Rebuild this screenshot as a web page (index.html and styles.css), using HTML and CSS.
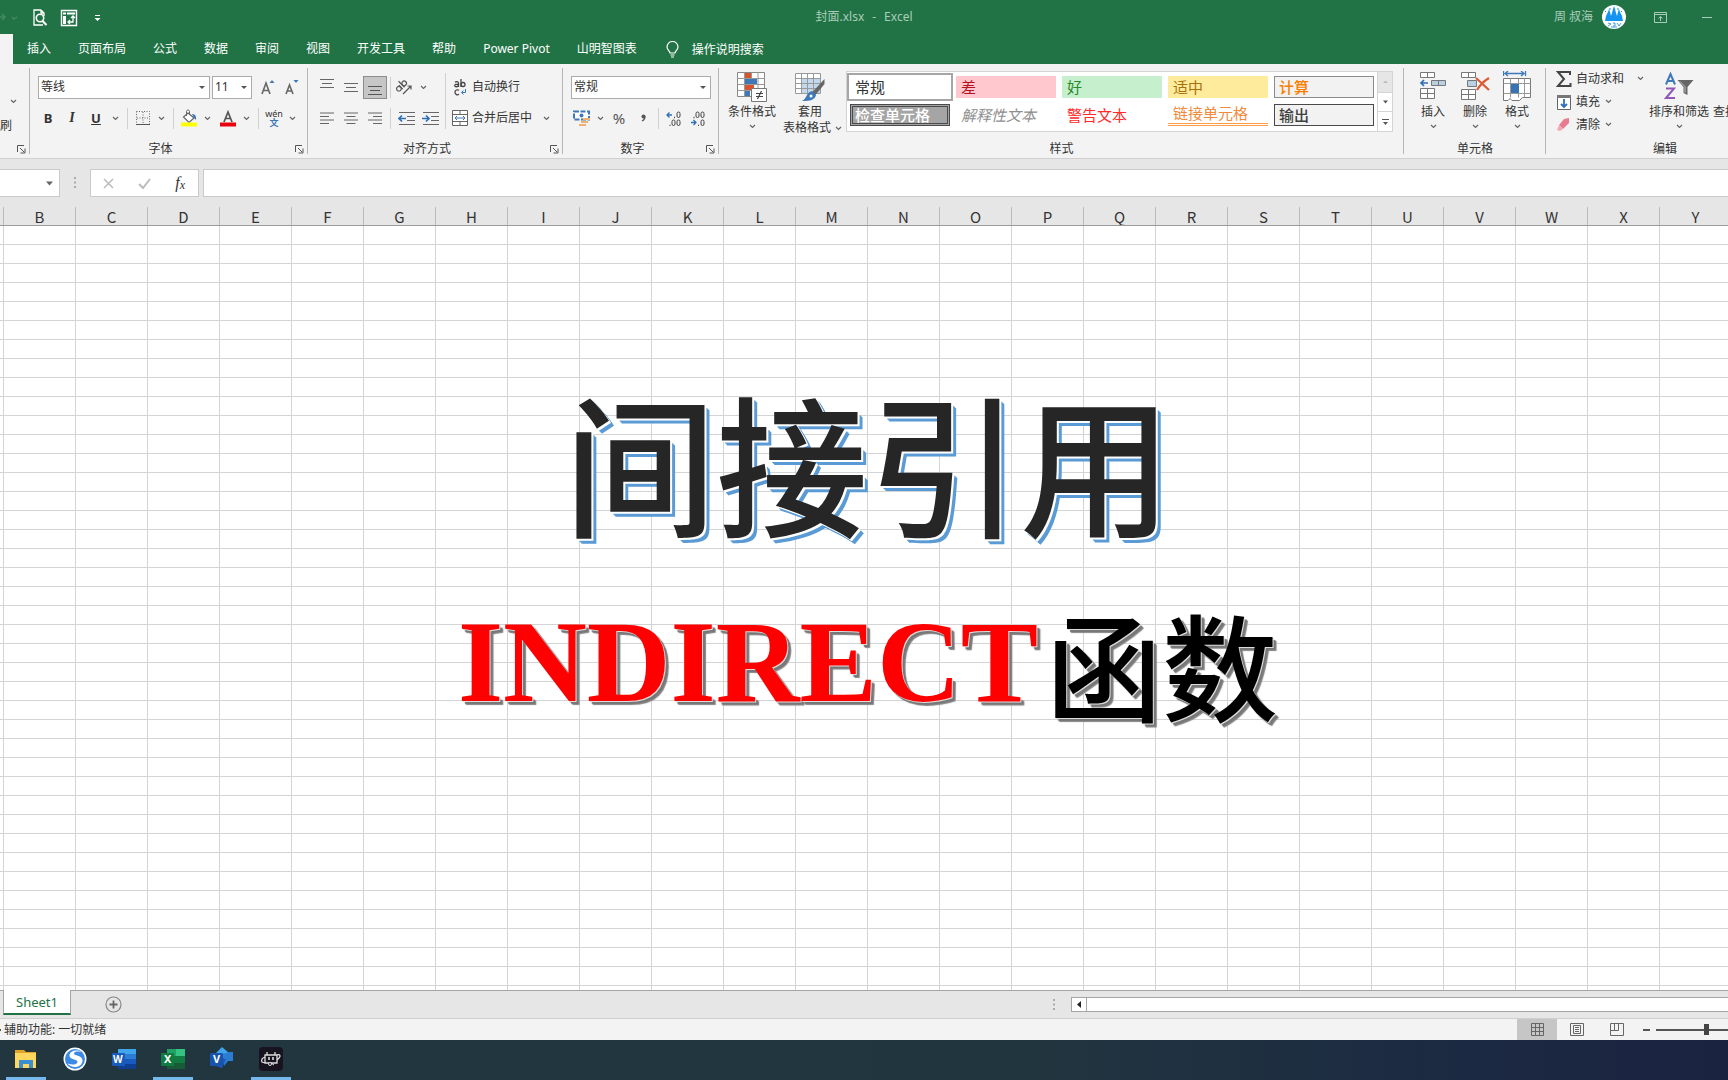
FILE: index.html
```html
<!DOCTYPE html>
<html lang="zh-CN">
<head>
<meta charset="utf-8">
<meta name="viewport" content="width=device-width, initial-scale=1">
<title>封面.xlsx - Excel</title>
<link rel="stylesheet" href="styles.css">
</head>
<body>
<svg class="defs" aria-hidden="true">
  <symbol id="chev" viewBox="0 0 7 5"><path d="M1 1l2.500 2.500L6 1" fill="none" stroke="#666" stroke-width="1.200"/></symbol>
  <symbol id="launch" viewBox="0 0 9 9"><path d="M.5 7V.5H7M3 3l4 4M8 3.500V8H3.500" fill="none" stroke="#555"/></symbol>
</svg>
<div class="app">
  <header class="titlebar">
    <div class="quick">
      <button class="qbtn faded" aria-label="恢复"><svg width="18" height="12" viewBox="0 0 18 12"><path d="M0 5h5M2 2l3 3-3 3M12 5l2 2 3-2" fill="none" stroke="#438a62" stroke-width="1.500"/></svg></button>
      <button class="qbtn" aria-label="打印预览"><svg width="16" height="18" viewBox="0 0 16 18"><path d="M9 1H2v15h9M9 1l3 3v3M9 1v3h3" fill="none" stroke="#fff" stroke-width="1.300"/><circle cx="8" cy="9" r="3.700" fill="#217346" stroke="#fff" stroke-width="1.600"/><path d="M10.500 12l4 4" stroke="#fff" stroke-width="2.200"/></svg></button>
      <button class="qbtn" aria-label="透视表"><svg width="18" height="18" viewBox="0 0 18 18"><path d="M1.500 1.500h15v15h-15z" fill="none" stroke="#fff" stroke-width="1.400"/><path d="M3 3.500h3v2H3zM7 3.500h8v2H7zM3 7h3v8H3z" fill="#fff"/><path d="M13 7v6H8M11 9l2-2 2 2M10 11l-2 2 2 2" fill="none" stroke="#fff" stroke-width="1.300"/></svg></button>
      <button class="qbtn more" aria-label="自定义快速访问工具栏"><svg width="7" height="8" viewBox="0 0 7 8"><path d="M1 1.500h5" stroke="#fff"/><path d="M0.500 4h6l-3 3z" fill="#fff"/></svg></button>
    </div>
    <div class="doc-title"><span>封面.xlsx</span><span>-</span><span>Excel</span></div>
    <div class="account">
      <span class="user">周 叔海</span>
      <svg class="avatar" width="24" height="24" viewBox="0 0 24 24"><circle cx="12" cy="12" r="12" fill="#fff"/><path d="M3 16l1-5 2-4 1-3 1 3 1 4 1-3 1-4 1-3 1 3 1 4 1 3 1-4 1-3 1 3 2 4 1 5z" fill="#1593f0"/><path d="M3 6l1 1M8 3v2M16 3v2M20 6l-1 1" stroke="#1593f0"/><path d="M6 18l3 1-3 2M11 18h2v3h-2M15 18l2 3 2-3M9 22h6" fill="none" stroke="#3a9fe8" stroke-width="1"/></svg>
      <button class="wbtn" aria-label="功能区显示选项"><svg width="13" height="11" viewBox="0 0 13 11"><path d="M.5.500h12v10H.5zM.5 2.500h12M6.500 9V4.500M4.500 6.500l2-2 2 2" fill="none" stroke="#a9cdb8"/></svg></button>
      <button class="wbtn" aria-label="最小化"><svg width="10" height="3" viewBox="0 0 10 3"><path d="M0 1.500h10" stroke="#a9cdb8"/></svg></button>
    </div>
  </header>

  <nav class="tabs">
    <span class="tab-active"></span>
    <a href="#">插入</a><a href="#">页面布局</a><a href="#">公式</a><a href="#">数据</a><a href="#">审阅</a><a href="#">视图</a><a href="#">开发工具</a><a href="#">帮助</a><a href="#">Power Pivot</a><a href="#">山明智图表</a>
    <a href="#" class="tell-me"><svg width="13" height="17" viewBox="0 0 13 17"><path d="M4 12c0-2-3-3-3-6a5.500 5.500 0 0 1 11 0c0 3-3 4-3 6zM4.500 14h4M5 16h3" fill="none" stroke="#fff" stroke-width="1.200"/></svg>操作说明搜索</a>
  </nav>

  <div class="ribbon">
    <section class="group g-clip">
      <div class="tools clip-tools">
        <svg class="chev"><use href="#chev"/></svg>
        <button class="plain">格式刷</button>
      </div>
      <footer><button class="launch" aria-label="剪贴板设置"><svg><use href="#launch"/></svg></button></footer>
    </section>

    <section class="group g-font">
      <div class="tools">
        <div class="row">
          <span class="combo font-name"><select aria-label="字体"><option>等线</option></select></span>
          <span class="combo font-size"><select aria-label="字号"><option>11</option></select></span>
          <button class="b24" aria-label="增大字号"><svg width="14" height="16" viewBox="0 0 14 16"><path d="M1 15L5 4l4 11M2.500 11.500h5" fill="none" stroke="#666" stroke-width="1.600"/><path d="M8.500 4l2.500-3 2.500 3z" fill="#3f78b8"/></svg></button>
          <button class="b24" aria-label="减小字号"><svg width="14" height="16" viewBox="0 0 14 16"><path d="M1 15l3.500-9L8 15M2.300 12h4.500" fill="none" stroke="#666" stroke-width="1.600"/><path d="M8.500 1l2.500 3 2.500-3z" fill="#3f78b8"/></svg></button>
        </div>
        <div class="row">
          <button class="b24 bold">B</button><button class="b24 ital">I</button><button class="b24 under">U</button>
          <button class="bchev" aria-label="下划线选项"><svg class="chev"><use href="#chev"/></svg></button>
          <i class="sep"></i>
          <button class="b22" aria-label="边框"><svg width="14" height="14" viewBox="0 0 14 14"><path d="M.5.500h13v13M.5.500v13M7 1v12M1 7h12" fill="none" stroke="#666" stroke-dasharray="1 1.500"/><path d="M0 13.500h14" stroke="#555"/></svg></button>
          <button class="bchev" aria-label="边框选项"><svg class="chev"><use href="#chev"/></svg></button>
          <i class="sep"></i>
          <button class="b22" aria-label="填充颜色"><svg width="18" height="18" viewBox="0 0 18 18"><path d="M8 4l6 5-5 4.500L3.500 8z" fill="#fff" stroke="#666" stroke-width="1.200"/><path d="M6.500 7V2.500c0-2 3-2 3 0V6" fill="none" stroke="#666"/><path d="M12 5c3 0 4.500 2 4 6l-2-2z" fill="#3f78b8"/><path d="M1 13.500h16v4H1z" fill="#ff0"/></svg></button>
          <button class="bchev" aria-label="填充颜色选项"><svg class="chev"><use href="#chev"/></svg></button>
          <button class="b22 gap-l" aria-label="字体颜色"><svg width="16" height="18" viewBox="0 0 16 18"><path d="M4 13L8 3l4 10M5.500 9.500h5" fill="none" stroke="#555" stroke-width="1.700"/><path d="M0 13.500h16v4H0z" fill="#e8000c"/></svg></button>
          <button class="bchev" aria-label="字体颜色选项"><svg class="chev"><use href="#chev"/></svg></button>
          <i class="sep"></i>
          <button class="b22 pinyin"><span>wén</span><b>文</b></button>
          <button class="bchev" aria-label="拼音选项"><svg class="chev"><use href="#chev"/></svg></button>
        </div>
      </div>
      <footer class="with-launch">字体<button class="launch" aria-label="字体设置"><svg><use href="#launch"/></svg></button></footer>
    </section>

    <section class="group g-align">
      <div class="tools cols">
        <div class="col">
          <div class="row">
            <button class="b24 up" aria-label="顶端对齐"><svg width="14" height="9" viewBox="0 0 14 9"><path d="M0 .5h14M2 4.500h10M0 8.500h14" stroke="#666"/></svg></button>
            <button class="b24" aria-label="垂直居中"><svg width="14" height="9" viewBox="0 0 14 9"><path d="M0 .5h14M2 4.500h10M0 8.500h14" stroke="#666"/></svg></button>
            <button class="b24 on down" aria-label="底端对齐"><svg width="14" height="9" viewBox="0 0 14 9"><path d="M0 .5h14M2 4.500h10M0 8.500h14" stroke="#555"/></svg></button>
            <i class="sep s3"></i>
            <button class="b22" aria-label="方向"><svg width="18" height="16" viewBox="0 0 18 16"><g fill="none" stroke="#555" stroke-width="1.200" transform="rotate(-45 5 9)"><circle cx="3" cy="8" r="2.300"/><path d="M5.500 5.500V11M8 2.500V11"/><circle cx="10.500" cy="8" r="2.300"/></g><path d="M7 15l8-8M11.500 7H15v3.500" fill="none" stroke="#555" stroke-width="1.200"/></svg></button>
            <button class="bchev" aria-label="方向选项"><svg class="chev"><use href="#chev"/></svg></button>
          </div>
          <div class="row">
            <button class="b24" aria-label="左对齐"><svg width="14" height="12" viewBox="0 0 14 12"><path d="M0 1h14M0 4.500h9M0 8h14M0 11.500h9" stroke="#666"/></svg></button>
            <button class="b24" aria-label="居中"><svg width="14" height="12" viewBox="0 0 14 12"><path d="M0 1h14M2.500 4.500h9M0 8h14M2.500 11.500h9" stroke="#666"/></svg></button>
            <button class="b24" aria-label="右对齐"><svg width="14" height="12" viewBox="0 0 14 12"><path d="M0 1h14M5 4.500h9M0 8h14M5 11.500h9" stroke="#666"/></svg></button>
            <i class="sep s3"></i>
            <button class="b24" aria-label="减少缩进"><svg width="17" height="13" viewBox="0 0 17 13"><path d="M1 .5h16M9 4.500h8M9 8.500h8M1 12.500h16" stroke="#666"/><path d="M1 6.500h7M4 3.500l-3 3 3 3" fill="none" stroke="#2f6fb5" stroke-width="1.700"/></svg></button>
            <button class="b24" aria-label="增加缩进"><svg width="17" height="13" viewBox="0 0 17 13"><path d="M1 .5h16M9 4.500h8M9 8.500h8M1 12.500h16" stroke="#666"/><path d="M0 6.500h7M4 3.500l3 3-3 3" fill="none" stroke="#2f6fb5" stroke-width="1.700"/></svg></button>
          </div>
        </div>
        <i class="vsep"></i>
        <div class="col">
          <div class="row">
            <button class="labeled"><svg width="16" height="17" viewBox="0 0 16 17"><g fill="none" stroke="#444" stroke-width="1.300"><path d="M3 3.200c1-.8 3.500-.8 3.500 1V8M6.500 5.500C4 5 2.700 5.500 2.700 6.600c0 1.600 3 1.500 3.800 0M9 0v8"/><circle cx="11" cy="5.500" r="2"/><path d="M7 11.300c-1.500-1-4-.5-4 2s2.500 3 4 2"/></g><path d="M13.500 10v3.500H9.500M11.500 11.500l-2 2 2 2" fill="none" stroke="#3f78b8"/></svg>自动换行</button>
          </div>
          <div class="row">
            <button class="labeled"><svg width="16" height="16" viewBox="0 0 16 16"><path d="M.5.500h15v15H.5zM.5 4.500h15M.5 11.500h15M8 .5v4M8 11.500v4" fill="#fff" stroke="#666"/><path d="M3 8h10M5 6L3 8l2 2M11 6l2 2-2 2" fill="none" stroke="#3f78b8"/></svg>合并后居中</button>
            <button class="bchev merge-more" aria-label="合并选项"><svg class="chev"><use href="#chev"/></svg></button>
          </div>
        </div>
      </div>
      <footer class="with-launch">对齐方式<button class="launch" aria-label="对齐设置"><svg><use href="#launch"/></svg></button></footer>
    </section>

    <section class="group g-num">
      <div class="tools">
        <div class="row"><span class="combo num-format"><select aria-label="数字格式"><option>常规</option></select></span></div>
        <div class="row">
          <button class="b22" aria-label="会计数字格式"><svg width="18" height="17" viewBox="0 0 18 17"><path d="M1 1.500h15v8H1z" fill="#fff" stroke="#3f78b8" stroke-width="2" stroke-dasharray="5 1.500"/><circle cx="8.500" cy="5.500" r="2" fill="#3f78b8"/><path d="M10 9h7M8 12h7M6 15h7" stroke="#f0b070" stroke-width="2.200"/></svg></button>
          <button class="bchev" aria-label="货币选项"><svg class="chev"><use href="#chev"/></svg></button>
          <button class="b24 pct">%</button>
          <button class="b24" aria-label="千位分隔样式"><svg width="5" height="8" viewBox="0 0 5 8"><circle cx="2.500" cy="2.500" r="2" fill="#555"/><path d="M4 2.500c0 2-1 3.500-3 4.500" fill="none" stroke="#555" stroke-width="1.300"/></svg></button>
          <i class="sep s3"></i>
          <button class="b24" aria-label="增加小数位数"><svg width="16" height="15" viewBox="0 0 16 15"><path d="M8 6.500h1M3.500 14.500h1" stroke="#444" stroke-width="1.300"/><g fill="none" stroke="#444"><rect x="11" y="1" width="3" height="5.500" rx="1.500"/><rect x="6" y="9" width="3" height="5.500" rx="1.500"/><rect x="11" y="9" width="3" height="5.500" rx="1.500"/></g><path d="M1 4h5M3.500 1.500L1 4l2.500 2.500" fill="none" stroke="#2f6fb5" stroke-width="1.300"/></svg></button>
          <button class="b24" aria-label="减少小数位数"><svg width="16" height="15" viewBox="0 0 16 15"><path d="M3.500 6.500h1M8 14.500h1" stroke="#444" stroke-width="1.300"/><g fill="none" stroke="#444"><rect x="6" y="1" width="3" height="5.500" rx="1.500"/><rect x="11" y="1" width="3" height="5.500" rx="1.500"/><rect x="11" y="9" width="3" height="5.500" rx="1.500"/></g><path d="M1 11.500h5M3.500 9L6 11.500 3.500 14" fill="none" stroke="#2f6fb5" stroke-width="1.300"/></svg></button>
        </div>
      </div>
      <footer class="with-launch">数字<button class="launch" aria-label="数字设置"><svg><use href="#launch"/></svg></button></footer>
    </section>

    <section class="group g-style">
      <div class="tools cols">
        <button class="big w48"><svg width="30" height="31" viewBox="0 0 30 31"><path d="M.5 1.500h27v24H.5z" fill="#fff" stroke="#888"/><path d="M.5 7.500h27M.5 13.500h27M.5 19.500h27M7.500 1.500v24M14.500 1.500v24M21 1.500v24" stroke="#999"/><path d="M8 2h6v5H8zM8 14h9v5H8z" fill="#d9532c"/><path d="M8 8h12v5H8zM8 20h5v5H8z" fill="#3f78b8"/><path d="M14.500 17.500h15v13h-15z" fill="#fff" stroke="#777"/><path d="M19 22.500h7M19 25.500h7M24.500 20l-4 8" stroke="#444" stroke-width="1.200"/></svg><span>条件格式</span><svg class="chev"><use href="#chev"/></svg></button>
        <button class="big w62"><svg width="30" height="31" viewBox="0 0 30 31"><path d="M.5 2.500h24v20H.5z" fill="#fff"/><path d="M7 8h18v15H7z" fill="#c3d8ec"/><path d="M.5 2.500h25v20H.5zM.5 7.500h25M.5 12.500h25M.5 17.500h25M6.500 2.500v20M12.500 2.500v20M18.500 2.500v20" fill="none" stroke="#999"/><path d="M29.500 8v5l-9 11-3-3z" fill="#666"/><path d="M17 20l4 4c-1 5-6 6-14 6 5-2 4-9 10-10z" fill="#3f78b8"/><circle cx="16" cy="25" r="1.500" fill="#fff"/></svg><span>套用</span><span class="line2">表格格式 <svg class="chev"><use href="#chev"/></svg></span></button>
        <div class="gallery">
          <div class="styles">
            <button class="st sel">常规</button><button class="st bad">差</button><button class="st good">好</button><button class="st neutral">适中</button><button class="st calc">计算</button>
            <button class="st check">检查单元格</button><button class="st explain">解释性文本</button><button class="st warn">警告文本</button><button class="st link">链接单元格</button><button class="st output">输出</button>
          </div>
          <div class="gscroll">
            <button class="off" aria-label="上一行"><svg width="5" height="4" viewBox="0 0 5 4"><path d="M0 3l2.500-2.500L5 3z" fill="#bbb"/></svg></button>
            <button aria-label="下一行"><svg width="5" height="4" viewBox="0 0 5 4"><path d="M0 .5h5L2.500 3.500z" fill="#555"/></svg></button>
            <button aria-label="其他"><svg width="7" height="8" viewBox="0 0 7 8"><path d="M0 1.500h7" stroke="#555"/><path d="M1 4h5L3.500 7z" fill="#555"/></svg></button>
          </div>
        </div>
      </div>
      <footer>样式</footer>
    </section>

    <section class="group g-cells">
      <div class="tools cols">
        <button class="big w42"><svg width="28" height="31" viewBox="0 0 28 31"><path d="M1.500 1.500h14v5h-14zM8.500 1.500v5M1.500 17.500h14v10h-14zM8.500 17.500v10M1.500 22.500h14" fill="#fff" stroke="#777"/><path d="M12.500 9.500h14v5h-14zM19.500 9.500v5" fill="#b9cfe4" stroke="#777"/><path d="M2 12h7M5 9l-3 3 3 3" fill="none" stroke="#2f6fb5" stroke-width="1.700"/></svg><span>插入</span><svg class="chev"><use href="#chev"/></svg></button>
        <button class="big w42"><svg width="30" height="31" viewBox="0 0 30 31"><path d="M1.500 1.500h14v5h-14zM8.500 1.500v5M1.500 18.500h14v10h-14zM8.500 18.500v10M1.500 23.500h14" fill="#fff" stroke="#777"/><path d="M7.500 9.500h9v6h-9z" fill="#b9cfe4" stroke="#777"/><path d="M16 7l13 12M29 7c-5 3-9 7-12 12" fill="none" stroke="#dc5a34" stroke-width="2.200"/></svg><span>删除</span><svg class="chev"><use href="#chev"/></svg></button>
        <button class="big w42"><svg width="28" height="31" viewBox="0 0 28 31"><path d="M.5 0v5M22.500 0v5M2 2.500h19M5 0L2 2.500 5 5M18 0l3 2.500L18 5" fill="none" stroke="#3f78b8" stroke-width="1.300"/><path d="M.5 7.500h27v19h-8l-3 3H9l-2-2-2 2H.5z" fill="#fff" stroke="#777"/><path d="M.5 12.500h27M.5 22.500h27M7.500 7.500v19M15.500 7.500v19M21.500 7.500v19" stroke="#999"/><path d="M8 13h8v9H8z" fill="#3873b3"/></svg><span>格式</span><svg class="chev"><use href="#chev"/></svg></button>
      </div>
      <footer>单元格</footer>
    </section>

    <section class="group g-edit">
      <div class="tools cols">
        <div class="stack">
          <button class="labeled wide"><svg width="16" height="16" viewBox="0 0 16 16"><path d="M14 4V1H2l6 7-6 7h12.500v-3" fill="none" stroke="#444" stroke-width="2"/></svg>自动求和<svg class="chev far"><use href="#chev"/></svg></button>
          <button class="labeled"><svg width="16" height="16" viewBox="0 0 16 16"><path d="M1.500 1.500h13v14h-13z" fill="#fff" stroke="#666"/><path d="M1 1h14v3H1z" fill="#777"/><path d="M8 5v8M5 10l3 3 3-3" fill="none" stroke="#2f6fb5" stroke-width="1.800"/></svg>填充<svg class="chev"><use href="#chev"/></svg></button>
          <button class="labeled"><svg width="16" height="16" viewBox="0 0 16 16"><path d="M8 2l5-1v5l-6 6-4-4z" fill="#e77c90"/><path d="M3 8l4 4-3 2-3-1z" fill="#f2a9b5"/></svg>清除<svg class="chev"><use href="#chev"/></svg></button>
        </div>
        <button class="big w64"><svg width="30" height="31" viewBox="0 0 30 31"><path d="M2 13.500L6.500 3 11 13.500M3.500 10h6" fill="none" stroke="#3f78b8" stroke-width="2"/><path d="M2 17.500h8L2 27h9" fill="none" stroke="#9256b8" stroke-width="2"/><path d="M13.500 9h16l-6 7v8l-4-2v-6z" fill="#666"/><path d="M16 10.500l5 5v6" fill="none" stroke="#bbb"/></svg><span>排序和筛选</span><svg class="chev"><use href="#chev"/></svg></button>
        <button class="big w64 find"><span>查找和选择</span></button>
      </div>
      <footer>编辑</footer>
    </section>
  </div>

  <div class="formula">
    <div class="namebox"><svg width="7" height="5" viewBox="0 0 7 5"><path d="M0 .5h7L3.500 4.500z" fill="#666"/></svg></div>
    <svg class="grip" width="3" height="12" viewBox="0 0 3 12"><path d="M0 1h2M0 5.500h2M0 10h2" stroke="#aaa" stroke-width="2"/></svg>
    <div class="fx">
      <button aria-label="取消"><svg width="11" height="11" viewBox="0 0 11 11"><path d="M1 1l9 9M10 1L1 10" stroke="#bbb" stroke-width="1.500"/></svg></button>
      <button aria-label="输入"><svg width="13" height="11" viewBox="0 0 13 11"><path d="M1 6l4 4 7-9" fill="none" stroke="#bbb" stroke-width="2"/></svg></button>
      <button class="fxb">f<small>x</small></button>
    </div>
    <input class="finput" type="text" aria-label="编辑栏">
  </div>

  <div class="colheads">
    <span></span><span>B</span><span>C</span><span>D</span><span>E</span><span>F</span><span>G</span><span>H</span><span>I</span><span>J</span><span>K</span><span>L</span><span>M</span><span>N</span><span>O</span><span>P</span><span>Q</span><span>R</span><span>S</span><span>T</span><span>U</span><span>V</span><span>W</span><span>X</span><span>Y</span>
  </div>

  <main class="sheet">
    <h1 class="art art-title">间接引用</h1>
    <p class="art art-sub"><span class="fn">INDIRECT</span><span>函数</span></p>
  </main>

  <div class="sheetbar">
    <button class="sheet-tab">Sheet1</button>
    <button class="add" aria-label="新工作表"><svg width="17" height="17" viewBox="0 0 17 17"><circle cx="8.500" cy="8.500" r="7.500" fill="none" stroke="#888" stroke-width="1.200"/><path d="M8.500 4.500v8M4.500 8.500h8" stroke="#666" stroke-width="1.800"/></svg></button>
    <svg class="grip push" width="3" height="12" viewBox="0 0 3 12"><path d="M0 1h2M0 5.500h2M0 10h2" stroke="#aaa" stroke-width="2"/></svg>
    <div class="hscroll"><button aria-label="向左滚动"><svg width="4" height="7" viewBox="0 0 4 7"><path d="M4 0v7L0 3.500z" fill="#222"/></svg></button></div>
  </div>

  <div class="status">
    <i class="dot"></i><span>辅助功能: 一切就绪</span>
    <div class="views">
      <button class="on" aria-label="普通"><svg width="13" height="13" viewBox="0 0 13 13"><path d="M.5.500h12v12H.5zM.5 4.500h12M.5 8.500h12M4.500.500v12M8.500.500v12" fill="none" stroke="#666"/></svg></button>
      <button aria-label="页面布局"><svg width="14" height="13" viewBox="0 0 14 13"><path d="M.5.500h13v12H.5zM3.500 2.500h7v8h-7zM5 4.500h4M5 6.500h4M5 8.500h4" fill="none" stroke="#666"/></svg></button>
      <button aria-label="分页预览"><svg width="14" height="13" viewBox="0 0 14 13"><path d="M.5.500h13v12H.5zM.5 7.500h8v-7M4.500.500v7" fill="none" stroke="#666"/></svg></button>
    </div>
    <div class="zoom"><button aria-label="缩小"><svg width="7" height="2" viewBox="0 0 7 2"><path d="M0 1h7" stroke="#555" stroke-width="2"/></svg></button><span class="track"><i></i></span></div>
  </div>

  <div class="taskbar">
    <button class="open" aria-label="文件资源管理器"><svg width="24" height="24" viewBox="0 0 24 24"><path d="M1 3h9l2 2h10v15H1z" fill="#e0a22a"/><path d="M1 6h21v15H1z" fill="#ffd75e"/><path d="M5 13h14v8h-4v-4H9v4H5z" fill="#3a8fd0"/></svg></button>
    <button aria-label="搜狗浏览器"><svg width="24" height="24" viewBox="0 0 24 24"><circle cx="12" cy="12" r="11.500" fill="#fff"/><circle cx="12" cy="12" r="10" fill="#3c8ae6"/><path d="M18.500 5C14 2 6.500 4 6.500 8.500c0 4.500 8 3.500 8 6.500 0 2.500-5 3.500-10 1.500 4 5.500 15 4.500 15-3 0-5.500-8.500-4.500-8.500-7 0-2 4-2.300 7.500-1.500z" fill="#fff"/></svg></button>
    <button aria-label="Word"><svg width="24" height="24" viewBox="0 0 24 24"><path d="M6 2h18v5H6z" fill="#41a5ee"/><path d="M6 7h18v5H6z" fill="#2b7cd3"/><path d="M6 12h18v5H6z" fill="#185abd"/><path d="M6 17h18v5H6z" fill="#103f91"/><rect y="6" width="13" height="13" rx="1" fill="#185abd"/><text x="1" y="16" font-size="10" font-weight="700" fill="#fff">W</text></svg></button>
    <button class="open" aria-label="Excel"><svg width="24" height="24" viewBox="0 0 24 24"><path d="M6 2h9v7H6z" fill="#21a366"/><path d="M15 2h9v7h-9z" fill="#33c481"/><path d="M6 9h18v7H6z" fill="#107c41"/><path d="M6 16h18v6H6z" fill="#185c37"/><rect y="6" width="13" height="13" rx="1" fill="#107c41"/><text x="3" y="16" font-size="11" font-weight="700" fill="#fff">X</text></svg></button>
    <button aria-label="Visio"><svg width="24" height="24" viewBox="0 0 24 24"><path d="M12 0l7 6-7 6-6-6z" fill="#41a5ee"/><path d="M13 7l6-2h4v9h-5l-4 5z" fill="#2b7cd3"/><path d="M6 12h10l-4 9-6-2z" fill="#185abd"/><rect y="6" width="13" height="13" rx="1" fill="#1654ae"/><text x="3" y="16" font-size="11" font-weight="700" fill="#fff">V</text></svg></button>
    <button class="open" aria-label="录屏助手"><svg width="24" height="24" viewBox="0 0 24 24"><rect width="24" height="24" rx="4" fill="#17141f"/><path d="M6 8h12v8H6zM8 8V5M16 8V5M6 10c-3 1-4 3-3 5l3 1M18 8c3-1 4 1 2 3l-2 2" fill="none" stroke="#ddd" stroke-width="1.300"/><path d="M10 10v3M14 10v3" stroke="#ddd" stroke-width="1.600"/><circle cx="11" cy="17" r="1.500" fill="#17141f" stroke="#ddd"/><path d="M12 16l3 2" stroke="#ddd"/></svg></button>
  </div>
</div>
</body>
</html>
```
FILE: styles.css
```css
* { box-sizing: border-box; }
body {
  margin: 0;
  font: 12px/16px "Noto Sans", "Noto Sans CJK SC", sans-serif;
  color: #333;
}
button {
  margin: 0;
  padding: 0;
  border: 0;
  background: none;
  font: inherit;
  color: inherit;
  display: flex;
  align-items: center;
  justify-content: center;
  flex: none;
}
svg { display: block; flex: none; }
.defs { position: absolute; width: 0; height: 0; }
.chev { width: 7px; height: 5px; }
.app { display: flex; flex-direction: column; min-height: 100vh; overflow: hidden; background: #e6e6e6; }

/* title bar */
.titlebar {
  display: grid;
  grid-template-columns: 1fr auto 1fr;
  align-items: center;
  height: 34px;
  background: #217346;
  color: #a9cdb8;
}
.quick { display: flex; align-items: center; gap: 12px; padding-top: 1px; }
.quick .faded { margin-right: 2px; }
.quick .more { margin-left: 4px; }
.doc-title { display: flex; gap: 8px; white-space: nowrap; }
.account { display: flex; align-items: center; justify-content: flex-end; padding-right: 16px; }
.avatar { margin: 0 28px 0 9px; }
.wbtn + .wbtn { margin-left: 35px; }

.tabs { display: flex; gap: 27px; height: 30px; background: #217346; white-space: nowrap; }
.tabs a { color: #fff; text-decoration: none; line-height: 29px; }
.tab-active { width: 13px; margin-right: -13px; background: #f3f3f3; }
.tabs .tell-me { display: flex; align-items: center; gap: 13px; padding-left: 2px; }

/* ribbon */
.ribbon {
  display: flex;
  height: 95px;
  margin-right: -56px;
  background: #f3f3f3;
  border-bottom: 1px solid #d0d0d0;
}
.group { position: relative; display: flex; flex-direction: column; flex: none; padding-top: 7px; }
.group::after {
  content: "";
  position: absolute;
  right: 0;
  top: 4px;
  bottom: 4px;
  width: 1px;
  background: #b5b5b5;
}
.group footer { display: flex; justify-content: center; align-items: center; height: 19px; position: relative; }
.group .with-launch { padding-right: 17px; }
.tools { flex: 1; }
.cols { display: flex; }
.g-clip { width: 30px; overflow: hidden; }
.clip-tools { display: flex; flex-direction: column; align-items: flex-end; gap: 14px; padding: 28px 18px 0 0; }
.clip-tools .chev { margin-right: -5px; }
.plain { white-space: nowrap; }
.g-font { width: 278px; }
.g-font .row { padding-left: 6px; }
.g-align { width: 255px; }
.g-align .tools { padding-left: 7px; }
.g-num { width: 156px; }
.g-num .tools { padding-left: 8px; }
.g-style { flex: 1; min-width: 420px; }
.g-style .tools { padding: 0 11px 0 9px; }
.g-cells { width: 142px; }
.g-cells .tools { padding-left: 8px; }
.g-edit { width: 238px; }
.g-edit .tools { padding-left: 10px; }
.launch { position: absolute; right: 4px; bottom: 4px; }
.launch svg { width: 9px; height: 9px; }

.row { display: flex; align-items: center; height: 24px; margin-top: 4px; }
.row + .row { margin-top: 7px; }
.b24 { width: 24px; height: 23px; }
.b22 { width: 22px; height: 23px; }
.bchev { width: 14px; height: 23px; }
.gap-l { margin-left: 3px; }
.sep { width: 1px; height: 21px; margin: 0 4px 0 5px; background: #d0d0d0; }
.sep.s3 { margin: 0 3px; }
.vsep { width: 1px; height: 56px; margin: 2px 6px 0 3px; background: #d0d0d0; }
.on { background: #c6c6c6; }
.row .on { border: 1px solid #8c8c8c; }
.up { align-items: flex-start; padding-top: 3px; }
.down { align-items: flex-end; padding-bottom: 3px; }
.bold { font-weight: 700; font-size: 13px; }
.ital { font: italic 700 14px/16px "Liberation Serif", serif; }
.under { font-weight: 700; font-size: 13px; text-decoration: underline; }
.pinyin { flex-direction: column; font-size: 9px; line-height: 9px; }
.pinyin b { color: #3f78b8; }
.pct { font-size: 15px; color: #555; }

.combo { position: relative; display: block; height: 23px; }
.combo select {
  display: block;
  width: 100%;
  height: 23px;
  padding: 0 2px;
  border: 1px solid #ababab;
  border-radius: 0;
  background: #fff;
  color: #333;
  font: inherit;
  appearance: none;
}
.combo::after {
  content: "";
  position: absolute;
  right: 5px;
  top: 10px;
  border: solid transparent;
  border-width: 3px 3px 0;
  border-top-color: #555;
}
.font-name { width: 172px; margin-left: 2px; }
.font-size { width: 40px; margin: 0 4px 0 2px; }
.num-format { width: 140px; }

.labeled { height: 23px; gap: 4px; white-space: nowrap; }
.merge-more { margin-left: 7px; }
.stack { width: 91px; margin-top: -4px; display: flex; flex-direction: column; align-items: flex-start; }
.stack .chev { margin-left: 1px; }
.stack .far { margin-left: 9px; }

.big { flex-direction: column; justify-content: flex-start; white-space: nowrap; height: 66px; }
.big > span { line-height: 16px; padding-top: 2px; }
.big .chev { margin-top: 4px; }
.big .line2 { display: flex; align-items: center; gap: 4px; margin-right: -5px; padding-top: 0; }
.big .line2 .chev { margin-top: 0; }
.w48 { width: 48px; }
.w62 { width: 62px; margin-left: 3px; }
.w42 { width: 42px; }
.w64 { width: 64px; }
.find { padding-top: 31px; }

.gallery { flex: 1; display: flex; height: 61px; margin-left: 5px; background: #fff; border: 1px solid #d4d4d4; }
.styles {
  flex: 1;
  display: grid;
  grid-template-columns: repeat(5, 1fr);
  grid-template-rows: 22px 22px;
  gap: 6px;
  padding: 4px 3px;
}
.st { justify-content: flex-start; padding-left: 5px; font-size: 15px; line-height: 20px; white-space: nowrap; min-width: 0; }
.sel { outline: 2px solid #a6a6a6; outline-offset: 1px; }
.bad { background: #ffc7ce; color: #b5121f; }
.good { background: #c6efce; color: #2b8a2b; }
.neutral { background: #ffeb9c; color: #a8700a; }
.calc { background: #f2f2f2; color: #fa7d00; border: 1px solid #8c8c8c; font-weight: 500; padding-left: 4px; }
.check { background: #a5a5a5; color: #fff; border: 3px double #4a4a4a; font-weight: 500; padding-left: 2px; line-height: 16px; }
.explain { color: #8f8f8f; font-style: italic; }
.warn { color: #ff2a2a; }
.link { color: #f08a3c; border-bottom: 3px double #ff9d4a; line-height: 19px; }
.output { background: #f2f2f2; color: #3f3f3f; border: 1px solid #4a4a4a; font-weight: 500; padding-left: 4px; }
.gscroll { width: 15px; display: grid; grid-template-rows: repeat(3, 1fr); border-left: 1px solid #d4d4d4; }
.gscroll button + button { border-top: 1px solid #d4d4d4; }
.gscroll .off { background: #e6e6e6; }

/* formula bar */
.formula { display: flex; align-items: center; height: 28px; margin-top: 10px; }
.namebox { width: 60px; height: 28px; display: flex; align-items: center; justify-content: flex-end; padding-right: 6px; background: #fff; border: 1px solid #cacaca; border-left: 0; }
.grip { margin: 0 15px 0 14px; }
.fx { width: 109px; height: 28px; display: grid; grid-template-columns: repeat(3, 1fr); background: #fff; border: 1px solid #cacaca; margin-right: 4px; }
.formula .grip { margin-right: 13px; }
.fxb { font: italic 16px/16px "Liberation Serif", serif; color: #333; }
.fxb small { font-size: 12px; padding-top: 3px; }
.finput { flex: 1; height: 28px; border: 1px solid #cacaca; border-right: 0; padding: 0 6px; background: #fff; font: inherit; }

/* worksheet */
.colheads { display: flex; height: 19px; margin-top: 10px; border-bottom: 1px solid #9b9b9b; overflow: hidden; }
.colheads span { flex: none; width: 72px; border-right: 1px solid #bcbcbc; text-align: center; font: 15px/20px "Noto Sans CJK SC", sans-serif; }
.colheads span:first-child { width: 4px; }
.sheet {
  flex: 1;
  display: flex;
  flex-direction: column;
  align-items: center;
  padding: 158px 0 0 8px;
  background:
    linear-gradient(to right, transparent 71px, #d4d4d4 71px) -68px 0 / 72px 19px,
    linear-gradient(transparent 18px, #d4d4d4 18px) 0 0 / 72px 19px,
    #fff;
}
.art { margin: 0; font-family: "Noto Sans CJK SC", sans-serif; font-weight: 500; white-space: nowrap; }
.art-title {
  font-size: 152px;
  line-height: 152px;
  color: #262626;
  text-shadow: 1px 1px 0 #fff, 2px 2px 0 #fff, 3px 3px 0 #5b9bd5, 4px 4px 0 #5b9bd5, 5px 5px 0 #5b9bd5;
}
.art-sub {
  display: flex;
  align-items: center;
  gap: 8px;
  margin-top: 68px;
  font-size: 116px;
  line-height: 116px;
  color: #000;
  text-shadow: 1px 1px 0 #ddd, 3px 3px 1px #777, 4px 4px 1px #888;
}
.art-sub .fn { font-family: "Liberation Serif", serif; font-weight: 700; color: #f00; }

.sheetbar { display: flex; align-items: center; height: 28px; border-top: 1px solid #a5a5a5; }
.sheet-tab {
  align-self: flex-start;
  height: 25px;
  margin: -1px 34px 0 3px;
  padding: 0 12px;
  background: #fff;
  border: solid #a5a5a5;
  border-width: 0 1px;
  border-bottom: 2px solid #217346;
  color: #217346;
  font-size: 13px;
}
.grip.push { margin: 0 15px 0 auto; }
.hscroll { width: 38%; height: 15px; background: #fff; border: 1px solid #a5a5a5; border-right: 0; }
.hscroll button { width: 15px; height: 13px; border-right: 1px solid #a5a5a5; }

.status { display: flex; align-items: center; height: 22px; background: #f3f3f3; border-top: 1px solid #cfcfcf; white-space: nowrap; }
.dot { width: 1px; height: 2px; margin-right: 3px; background: #555; }
.views { display: flex; margin-left: auto; }
.views button { width: 40px; height: 21px; }
.zoom { display: flex; align-items: center; width: 91px; padding-left: 4px; }
.zoom button { width: 10px; height: 20px; }
.track { flex: 1; height: 2px; margin-left: 5px; background: #555; position: relative; }
.track i { position: absolute; right: 19px; top: -5px; width: 5px; height: 11px; background: #444; }

.taskbar { display: flex; gap: 9px; height: 40px; padding-left: 6px; background: linear-gradient(to right, #21363f 0%, #21353f 60%, #1c2942 85%, #1a2340); }
.taskbar button { width: 40px; border-bottom: 3px solid transparent; }
.taskbar .open { border-bottom-color: #76b9ed; }
```
